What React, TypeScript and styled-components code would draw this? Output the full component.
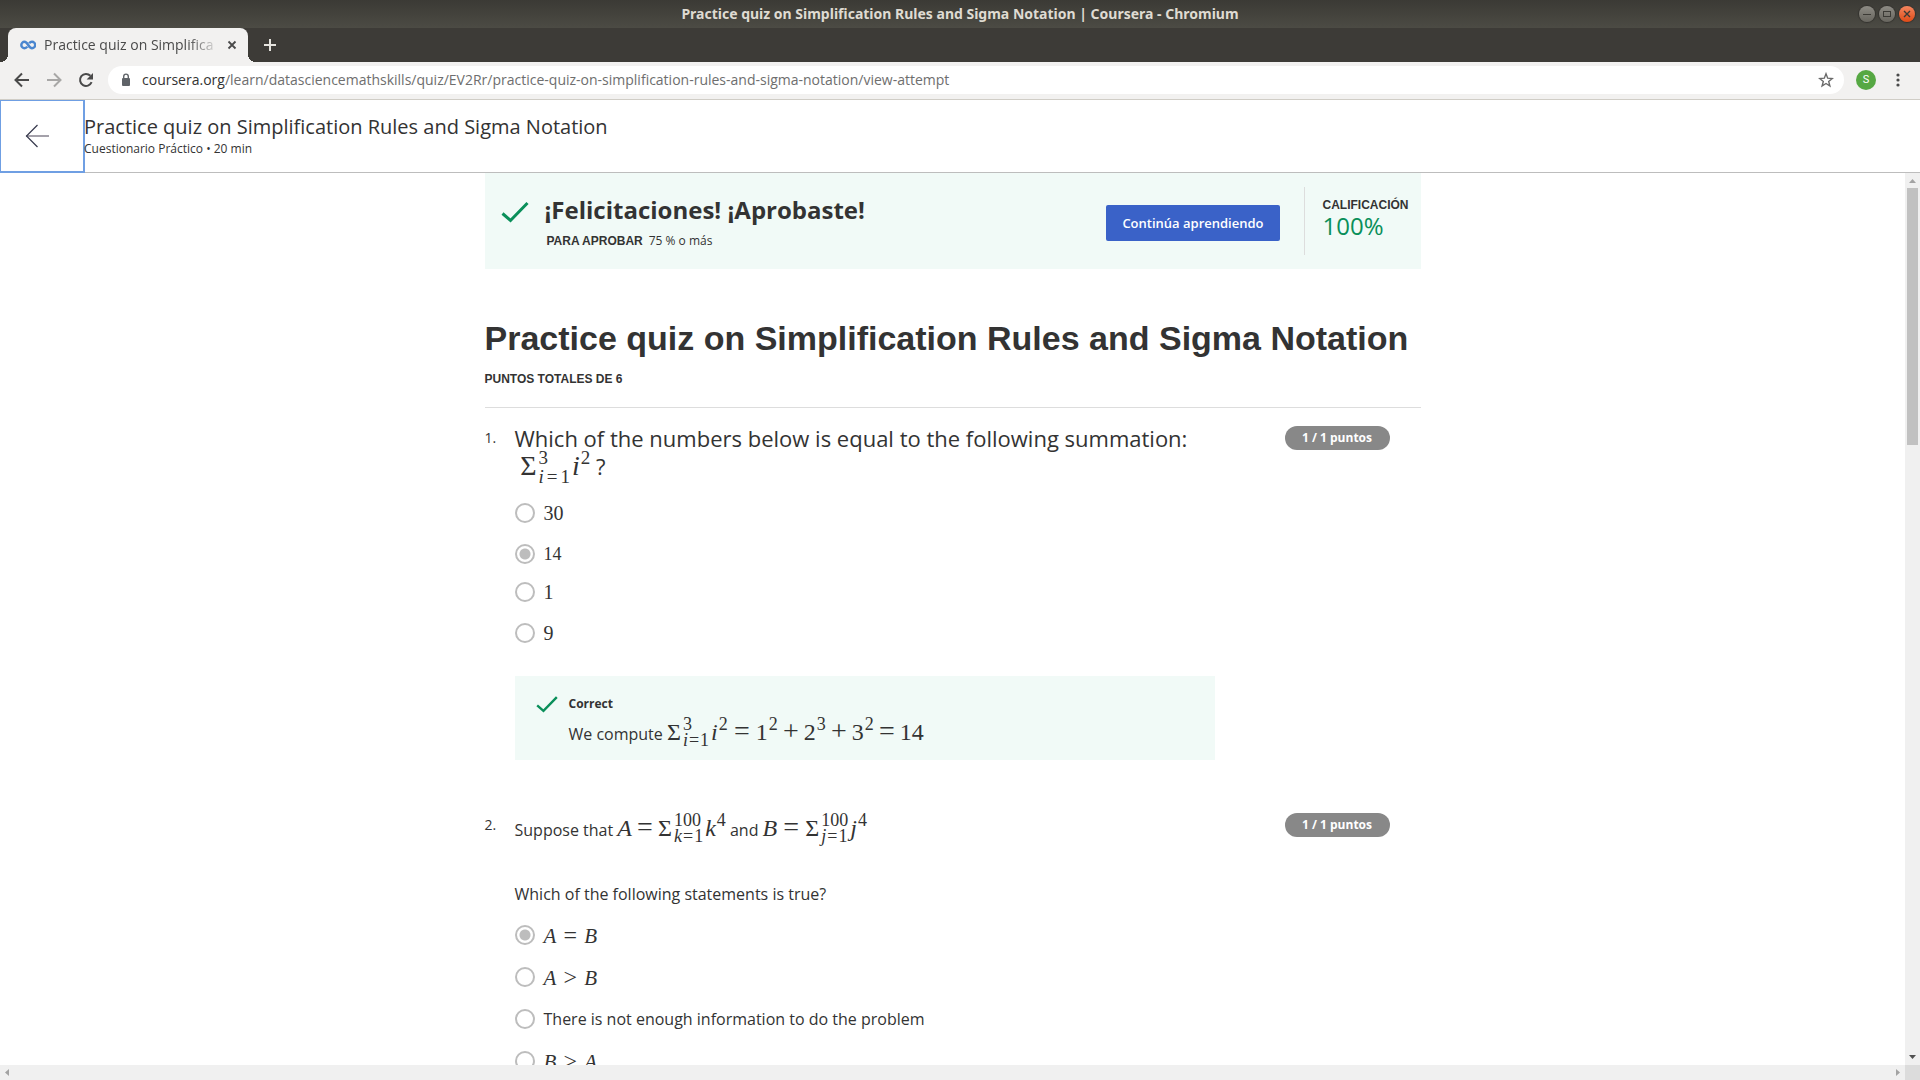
import React, { useState } from "react";
import styled, { createGlobalStyle, css } from "styled-components";

const ui = `"Open Sans", "Noto Sans", sans-serif`;
const arial = `"Liberation Sans", Arial, sans-serif`;
const serif = `"Liberation Serif", "Times New Roman", serif`;

const Global = createGlobalStyle`
  *, *::before, *::after { box-sizing: border-box; }
  body { margin: 0; background: #fff; color: #333; font-family: ${ui}; }
  button, input { font: inherit; color: inherit; }
  button { cursor: pointer; }
  h1, h2, p, ol, fieldset { margin: 0; padding: 0; border: 0; }
`;

const Window = styled.div`
  display: flex;
  flex-direction: column;
  height: 100vh;
  overflow: hidden;
`;

/* ---------- window frame ---------- */

const TitleBar = styled.div`
  display: grid;
  grid-template-columns: 1fr auto 1fr;
  align-items: center;
  flex: none;
  height: 28px;
  padding: 0 5px;
  background: linear-gradient(#3b3a35, #4c4b44);
`;

const WindowTitle = styled.div`
  grid-column: 2;
  color: #dfdbd2;
  font: bold 14px/28px "Noto Sans", sans-serif;
`;

const WindowButtons = styled.div`
  display: flex;
  justify-content: flex-end;
  gap: 4px;
`;

const WindowButton = styled.button<{ $close?: boolean }>`
  display: grid;
  place-items: center;
  width: 16px;
  height: 16px;
  padding: 0;
  border: 0;
  border-radius: 50%;
  color: #3b3a35;
  box-shadow: 0 0 1px 1px #34332f;
  background: ${(p) => (p.$close ? "linear-gradient(#f4865f, #df4a16)" : "linear-gradient(#8d8b84, #67655e)")};
`;

const TabStrip = styled.div`
  display: flex;
  align-items: center;
  flex: none;
  height: 34px;
  padding-left: 8px;
  background: #3d3b37;
`;

const Tab = styled.div`
  position: relative;
  display: flex;
  align-items: center;
  width: 240px;
  height: 34px;
  padding: 0 10px 0 12px;
  border-radius: 8px 8px 0 0;
  background: #f2f1f0;

  &::before, &::after {
    content: "";
    position: absolute;
    bottom: 0;
    width: 8px;
    height: 8px;
  }
  &::before { left: -8px; background: radial-gradient(circle at 0 0, transparent 8px, #f2f1f0 8px); }
  &::after { right: -8px; background: radial-gradient(circle at 100% 0, transparent 8px, #f2f1f0 8px); }
`;

const TabTitle = styled.span`
  flex: 1;
  min-width: 0;
  margin: 0 6px 0 8px;
  overflow: hidden;
  white-space: nowrap;
  color: #4a4a4a;
  font: 14px/20px ${ui};
  mask-image: linear-gradient(to right, #000 calc(100% - 32px), transparent);
`;

const IconButton = styled.button<{ $size: number; $color?: string }>`
  display: grid;
  place-items: center;
  flex: none;
  width: ${(p) => p.$size}px;
  height: ${(p) => p.$size}px;
  padding: 0;
  border: 0;
  background: none;
  color: ${(p) => p.$color ?? "#4a4a4a"};
`;

const Toolbar = styled.div`
  position: relative;
  z-index: 1;
  display: flex;
  align-items: center;
  flex: none;
  gap: 4px;
  height: 38px;
  padding: 0 8px 1px;
  background: #f2f1f0;
  border-bottom: 1px solid #d0cdc6;
`;

const AddressBar = styled.div`
  display: flex;
  align-items: center;
  flex: 1;
  height: 28px;
  margin: 0 4px;
  padding: 0 8px 0 11px;
  border-radius: 14px;
  background: #fff;
`;

const Address = styled.a`
  flex: 1;
  margin-left: 9px;
  color: #6e6e6e;
  text-decoration: none;
  font: 14px/20px ${ui};

  b { color: #333; font-weight: 400; }
`;

const Avatar = styled.button`
  width: 20px;
  height: 20px;
  margin: 0 4px;
  padding: 0;
  border: 0;
  border-radius: 50%;
  background: #56a843;
  color: #fff;
  font: 11px/20px Roboto, sans-serif;
  text-align: center;
`;

/* ---------- page ---------- */

const PageHeader = styled.header`
  display: flex;
  flex: none;
  height: 73px;
  border-bottom: 1px solid #bdbdbd;
`;

const BackButton = styled.button`
  display: grid;
  align-items: center;
  width: 84px;
  height: 72px;
  padding: 0 0 0 24px;
  border: 0;
  background: #fff;
  outline: 2px solid #6f9fe3;
  outline-offset: -1px;
`;

const HeaderText = styled.div`
  padding-top: 13px;
`;

const HeaderTitle = styled.h2`
  font-size: 20px;
  font-weight: 400;
  line-height: 28px;
`;

const HeaderMeta = styled.p`
  font-size: 12px;
  line-height: 16px;
`;

const Viewport = styled.div`
  display: grid;
  grid-template: minmax(0, 1fr) 15px / minmax(0, 1fr) 15px;
  flex: 1;
  min-height: 0;
`;

const Content = styled.main`
  overflow: hidden;
`;

const Column = styled.div`
  max-width: 936px;
  margin: 0 auto;
`;

const Banner = styled.section`
  display: flex;
  align-items: center;
  height: 96px;
  padding: 0 12px 0 16px;
  background: #f1faf7;

  > svg { align-self: flex-start; margin-top: 26px; }
`;

const BannerText = styled.div`
  flex: 1;
  margin-left: 16px;
  padding-top: 2px;
`;

const BannerTitle = styled.h2`
  font-size: 24px;
  line-height: 32px;
`;

const Label = styled.span`
  font: bold 12px/18px ${arial};
`;

const Criterion = styled.p`
  display: flex;
  gap: 6px;
  padding: 6px 0 0 2px;
  font-size: 12px;
  line-height: 18px;
`;

const Continue = styled.button`
  height: 36px;
  margin-top: 4px;
  padding: 0 16px;
  border: 0;
  border-radius: 2px;
  background: #3a62c8;
  color: #fff;
  font-size: 13px;
  font-weight: 600;
`;

const Grade = styled.div`
  display: flex;
  flex-direction: column;
  height: 68px;
  margin-left: 24px;
  padding: 9px 0 0 18px;
  border-left: 1px solid #ddd;
`;

const GradeValue = styled.span`
  color: #0a8f5a;
  font-size: 24px;
  line-height: 24px;
`;

const QuizHead = styled.div`
  padding: 47px 0 19px;
  border-bottom: 1px solid #ddd;
`;

const QuizTitle = styled.h1`
  font: bold 34px/44px ${arial};
  margin-bottom: 6px;
`;

const Question = styled.section`
  display: grid;
  grid-template-columns: 30px minmax(0, 1fr) 105px;
  padding: 16px 31px 0 0;
`;

const Number = styled.span`
  font-size: 14px;
  line-height: 28px;
`;

const Points = styled.span`
  height: 24px;
  margin-top: 2px;
  border-radius: 12px;
  background: #888;
  color: #fff;
  font-size: 12px;
  font-weight: 700;
  line-height: 24px;
  text-align: center;
`;

const Prompt = styled.div<{ $large?: boolean }>`
  max-width: 700px;
  padding-bottom: ${(p) => (p.$large ? 11 : 6)}px;
  font-size: ${(p) => (p.$large ? 22 : 16)}px;
  line-height: 28px;
`;

const Paragraph = styled.p<{ $spaced?: boolean }>`
  ${(p) => p.$spaced && css`
    margin-bottom: 31px;
    line-height: 38px;
  `}
`;

const Options = styled.fieldset`
  display: flex;
  flex-direction: column;
  min-width: 0;
`;

const Option = styled.label<{ $height: number }>`
  display: flex;
  align-items: center;
  gap: 9px;
  height: ${(p) => p.$height}px;
  font-size: 16px;
  line-height: 24px;
`;

const Radio = styled.input`
  appearance: none;
  flex: none;
  width: 20px;
  height: 20px;
  margin: 0;
  border: 2px solid #bdbdbd;
  border-radius: 50%;
  background: #fff;

  &:checked { background: radial-gradient(circle, #bdbdbd 5px, #fff 6px); }
`;

const Feedback = styled.div`
  display: flex;
  gap: 11px;
  max-width: 700px;
  height: 84px;
  margin: 21px 0 35px;
  padding: 18px 21px;
  background: #f1faf7;
`;

const FeedbackTitle = styled.p`
  font-size: 12px;
  font-weight: 700;
  line-height: 20px;
`;

const FeedbackBody = styled.p`
  font-size: 16px;
  line-height: 40px;
`;

/* ---------- formulas ---------- */

/* Each formula size carries its own script, row pitch, rise and operator sizes. */
const scales = {
  compact: { base: 18, script: 14, pitch: 14, rise: 8, op: 24 },
  small: { base: 20, script: 14, pitch: 14, rise: 8, op: 24 },
  option: { base: 21, script: 14, pitch: 14, rise: 8, op: 24 },
  text: { base: 24, script: 18, pitch: 16, rise: 10, op: 28 },
  large: { base: 28, script: 19, pitch: 19, rise: 11, op: 28 },
};

const Formula = styled.span<{ $scale: keyof typeof scales }>`
  --script: ${(p) => scales[p.$scale].script}px;
  --pitch: ${(p) => scales[p.$scale].pitch}px;
  --rise: ${(p) => scales[p.$scale].rise}px;
  --op: ${(p) => scales[p.$scale].op}px;
  display: inline-flex;
  align-items: baseline;
  font-family: ${serif};
  font-size: ${(p) => scales[p.$scale].base}px;
  line-height: 24px;
  white-space: nowrap;
`;

const Relation = styled.span<{ $width?: number }>`
  display: flex;
  justify-content: center;
  width: ${(p) => p.$width ?? 28}px;
  font-size: var(--op);
`;

const raised = css`
  position: relative;
  top: calc(-1 * var(--rise));
  font-size: var(--script);
  line-height: var(--pitch);
`;

const Power = styled.sup`
  ${raised}
  margin-left: 1px;
  vertical-align: baseline;
`;

const Limits = styled.span`
  ${raised}
  display: inline-grid;
  grid-auto-rows: var(--pitch);
  height: var(--pitch);
  margin: 0 2px;
`;

const Equals = styled.span<{ $wide?: boolean }>`
  padding: 0 ${(p) => (p.$wide ? 3 : 1)}px;
`;

function Sum({ index, to, wide }: { index: string; to: string; wide?: boolean }) {
  return (
    <>
      <span>Σ</span>
      <Limits>
        <span>{to}</span>
        <span><i>{index}</i><Equals $wide={wide}>=</Equals>1</span>
      </Limits>
    </>
  );
}

function Compare({ left, sign, right }: { left: string; sign: string; right: string }) {
  return (
    <Formula $scale="option">
      <i>{left}</i>
      <Relation>{sign}</Relation>
      <i>{right}</i>
    </Formula>
  );
}

/* ---------- scrollbars ---------- */

const Track = styled.div<{ $vertical?: boolean }>`
  display: flex;
  flex-direction: ${(p) => (p.$vertical ? "column" : "row")};
  justify-content: space-between;
  align-items: center;
  background: #f0f0f0;
`;

const Thumb = styled.div`
  width: 11px;
  height: 257px;
  margin-bottom: auto;
  background: #c1c1c1;
`;

const Corner = styled.div`
  background: #dcdcdc;
`;

function Arrow({ points, color }: { points: string; color: string }) {
  return (
    <svg width="15" height="15" viewBox="0 0 15 15" aria-hidden="true">
      <polygon points={points} fill={color} />
    </svg>
  );
}

function Check({ size }: { size: number }) {
  return (
    <svg width={size} height={size} viewBox="0 0 28 28" fill="none" stroke="#0a8f5a" strokeWidth="3" aria-hidden="true">
      <path d="M1.5 14.5 L9.5 21.5 L26.5 4" />
    </svg>
  );
}

type Choice = { key: string; body: React.ReactNode; height: number };

function Choices({ name, initial, items }: { name: string; initial: string; items: Choice[] }) {
  const [value, setValue] = useState(initial);
  return (
    <Options aria-label={name}>
      {items.map((c) => (
        <Option key={c.key} $height={c.height}>
          <Radio type="radio" name={name} checked={value === c.key} onChange={() => setValue(c.key)} />
          {c.body}
        </Option>
      ))}
    </Options>
  );
}

const first: Choice[] = [
  { key: "30", body: <Formula $scale="small">30</Formula>, height: 44 },
  { key: "14", body: <Formula $scale="compact">14</Formula>, height: 38 },
  { key: "1", body: <Formula $scale="small">1</Formula>, height: 38 },
  { key: "9", body: <Formula $scale="small">9</Formula>, height: 44 },
];

const second: Choice[] = [
  { key: "eq", body: <Compare left="A" sign="=" right="B" />, height: 42 },
  { key: "gt", body: <Compare left="A" sign=">" right="B" />, height: 42 },
  { key: "none", body: "There is not enough information to do the problem", height: 42 },
  { key: "lt", body: <Compare left="B" sign=">" right="A" />, height: 42 },
];

export default function App() {
  return (
    <Window>
      <Global />
      <TitleBar>
        <WindowTitle>Practice quiz on Simplification Rules and Sigma Notation | Coursera - Chromium</WindowTitle>
        <WindowButtons>
          <WindowButton aria-label="Minimize">
            <svg width="10" height="10" viewBox="0 0 10 10"><path d="M1 5.5h8" stroke="currentColor" /></svg>
          </WindowButton>
          <WindowButton aria-label="Maximize">
            <svg width="10" height="10" viewBox="0 0 10 10"><rect x="1.5" y="2.5" width="7" height="5" fill="none" stroke="currentColor" /></svg>
          </WindowButton>
          <WindowButton $close aria-label="Close">
            <svg width="10" height="10" viewBox="0 0 10 10"><path d="M2 2l6 6M8 2l-6 6" stroke="currentColor" strokeWidth="1.4" /></svg>
          </WindowButton>
        </WindowButtons>
      </TitleBar>

      <TabStrip>
        <Tab>
          <svg width="16" height="16" viewBox="0 0 16 16" fill="none" stroke="#4a86cf" strokeWidth="2.4" aria-hidden="true">
            <path d="M9.2 6.2 C10 5.2 10.9 4.8 12 4.8 A3.2 3.2 0 0 1 12 11.2 C8.5 11.2 8 4.8 4.5 4.8 A3.2 3.2 0 0 0 4.5 11.2 C5.8 11.2 6.7 10.5 7.3 9.6" />
          </svg>
          <TabTitle>Practice quiz on Simplifica</TabTitle>
          <IconButton $size={12} aria-label="Close tab">
            <svg width="12" height="12" viewBox="0 0 12 12"><path d="M2.5 2.5l7 7M9.5 2.5l-7 7" stroke="currentColor" strokeWidth="1.8" /></svg>
          </IconButton>
        </Tab>
        <IconButton $size={44} $color="#e6e4df" aria-label="New tab">
          <svg width="14" height="14" viewBox="0 0 14 14"><path d="M7 1v12M1 7h12" stroke="currentColor" strokeWidth="2" /></svg>
        </IconButton>
      </TabStrip>

      <Toolbar>
        <IconButton $size={28} aria-label="Back">
          <svg width="16" height="16" viewBox="0 0 16 16" fill="none" stroke="currentColor" strokeWidth="2"><path d="M15 8H2M8 1.5L1.5 8L8 14.5" /></svg>
        </IconButton>
        <IconButton $size={28} $color="#a8a7a6" aria-label="Forward">
          <svg width="16" height="16" viewBox="0 0 16 16" fill="none" stroke="currentColor" strokeWidth="2"><path d="M1 8h13M8 1.5L14.5 8L8 14.5" /></svg>
        </IconButton>
        <IconButton $size={28} aria-label="Reload">
          <svg width="16" height="16" viewBox="0 0 16 16"><path d="M13.6 10.2A6 6 0 1 1 12.4 3.8" fill="none" stroke="currentColor" strokeWidth="2" /><path d="M15 1v6.4H8.6z" fill="currentColor" /></svg>
        </IconButton>
        <AddressBar>
          <svg width="14" height="14" viewBox="0 0 14 14" aria-hidden="true"><rect x="3" y="5" width="8" height="8" rx="1" fill="#5f6368" /><path d="M4.7 5.5V3.4a2.3 2.3 0 0 1 4.6 0v2.1" fill="none" stroke="#5f6368" strokeWidth="1.4" /></svg>
          <Address href="#"><b>coursera.org</b>/learn/datasciencemathskills/quiz/EV2Rr/practice-quiz-on-simplification-rules-and-sigma-notation/view-attempt</Address>
          <IconButton $size={20} $color="#6a6a6a" aria-label="Bookmark this page">
            <svg width="16" height="16" viewBox="0 0 16 16"><path d="M8 1.8l1.7 4.4 4.6.3-3.6 2.9 1.2 4.6L8 11.5 4.1 14l1.2-4.6L1.7 6.5l4.6-.3z" fill="none" stroke="currentColor" strokeWidth="1.4" /></svg>
          </IconButton>
        </AddressBar>
        <Avatar aria-label="Profile S">S</Avatar>
        <IconButton $size={28} aria-label="Menu">
          <svg width="4" height="14" viewBox="0 0 4 14" fill="currentColor"><circle cx="2" cy="2" r="1.6" /><circle cx="2" cy="7" r="1.6" /><circle cx="2" cy="12" r="1.6" /></svg>
        </IconButton>
      </Toolbar>

      <PageHeader>
        <BackButton aria-label="Back">
          <svg width="26" height="26" viewBox="0 0 26 26" fill="none" stroke="#373a4d">
            <path d="M2 13H25" strokeWidth="1.4" stroke="#7d7986" />
            <path d="M13.5 2L2.5 13L13.5 24" strokeWidth="1.2" />
          </svg>
        </BackButton>
        <HeaderText>
          <HeaderTitle>Practice quiz on Simplification Rules and Sigma Notation</HeaderTitle>
          <HeaderMeta>Cuestionario Práctico • 20 min</HeaderMeta>
        </HeaderText>
      </PageHeader>

      <Viewport>
        <Content>
          <Column>
            <Banner>
              <Check size={28} />
              <BannerText>
                <BannerTitle>¡Felicitaciones! ¡Aprobaste!</BannerTitle>
                <Criterion><Label>PARA APROBAR</Label> 75 % o más</Criterion>
              </BannerText>
              <Continue>Continúa aprendiendo</Continue>
              <Grade>
                <Label>CALIFICACIÓN</Label>
                <GradeValue>100%</GradeValue>
              </Grade>
            </Banner>

            <QuizHead>
              <QuizTitle>Practice quiz on Simplification Rules and Sigma Notation</QuizTitle>
              <Label>PUNTOS TOTALES DE 6</Label>
            </QuizHead>

            <Question>
              <Number>1.</Number>
              <div>
                <Prompt $large>
                  <Paragraph>Which of the numbers below is equal to the following summation:</Paragraph>
                  <Paragraph>
                    &nbsp;<Formula $scale="large"><Sum index="i" to="3" wide /><i>i</i><Power>2</Power></Formula> ?
                  </Paragraph>
                </Prompt>
                <Choices name="Question 1" initial="14" items={first} />
                <Feedback>
                  <Check size={22} />
                  <div>
                    <FeedbackTitle>Correct</FeedbackTitle>
                    <FeedbackBody>
                      We compute{" "}
                      <Formula $scale="text">
                        <Sum index="i" to="3" /><i>i</i><Power>2</Power>
                        <Relation>=</Relation>1<Power>2</Power>
                        <Relation $width={26}>+</Relation>2<Power>3</Power>
                        <Relation $width={26}>+</Relation>3<Power>2</Power>
                        <Relation $width={26}>=</Relation>14
                      </Formula>
                    </FeedbackBody>
                  </div>
                </Feedback>
              </div>
              <Points>1 / 1 puntos</Points>
            </Question>

            <Question>
              <Number>2.</Number>
              <div>
                <Prompt>
                  <Paragraph $spaced>
                    Suppose that{" "}
                    <Formula $scale="text"><i>A</i><Relation $width={26}>=</Relation><Sum index="k" to="100" /><i>k</i><Power>4</Power></Formula>
                    {" "}and{" "}
                    <Formula $scale="text"><i>B</i><Relation>=</Relation><Sum index="j" to="100" /><i>j</i><Power>4</Power></Formula>
                  </Paragraph>
                  <Paragraph>Which of the following statements is true?</Paragraph>
                </Prompt>
                <Choices name="Question 2" initial="eq" items={second} />
              </div>
              <Points>1 / 1 puntos</Points>
            </Question>
          </Column>
        </Content>
        <Track $vertical>
          <Arrow points="4,10 11,10 7.5,6" color="#a3a3a3" />
          <Thumb />
          <Arrow points="4,5 11,5 7.5,9" color="#505050" />
        </Track>
        <Track>
          <Arrow points="9,4 9,11 5,7.5" color="#a3a3a3" />
          <Arrow points="6,4 6,11 10,7.5" color="#a3a3a3" />
        </Track>
        <Corner />
      </Viewport>
    </Window>
  );
}
